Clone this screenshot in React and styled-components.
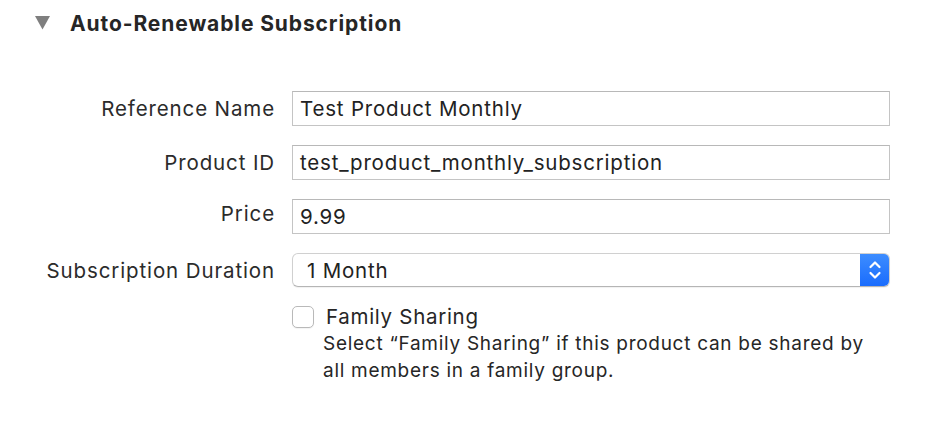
import React from "react";
import styled, { createGlobalStyle } from "styled-components";

const Global = createGlobalStyle`
  html, body { margin: 0; padding: 0; background: #ffffff; }
  body { font-family: Inter, "Noto Sans", sans-serif; color: #262626; }
`;

const Page = styled.div`
  width: 930px;
  height: 432px;
  box-sizing: border-box;
  padding-top: 9px;
  overflow: hidden;
`;

const Header = styled.div`
  display: flex;
  align-items: center;
  gap: 20px;
  padding-left: 35px;
  height: 28px;
`;

const Title = styled.h2`
  margin: 0;
  font-size: 21px;
  font-weight: 700;
  color: #262626;
  letter-spacing: 0.9px;
`;

const Form = styled.div`
  display: grid;
  grid-template-columns: 274px 598px;
  column-gap: 18px;
  row-gap: 19px;
  margin-top: 54px;
  align-items: center;
`;

const Label = styled.label`
  text-align: right;
  font-size: 20.5px;
  letter-spacing: 0.88px;
  margin-right: -1px;
  color: #2b2b2b;
  transform: translateY(${(p) => p.$shift || 0}px);
`;

const Field = styled.div`
  box-sizing: border-box;
  height: 35px;
  border: 1px solid #c4c4c4;
  border-top-color: #b8b8b8;
  background: #fff;
  display: flex;
  align-items: center;
  padding-left: 7px;
  font-size: 20.5px;
  letter-spacing: 0.8px;
  color: #222;
`;

const Popup = styled.div`
  box-sizing: border-box;
  height: 34px;
  border-radius: 6px;
  border: 1px solid #d0d0d0;
  border-bottom-color: #b5b5b5;
  box-shadow: 0 1px 1px rgba(0, 0, 0, 0.06);
  background: #fff;
  display: flex;
  align-items: stretch;
  overflow: hidden;
  font-size: 20.5px;
  letter-spacing: 0.8px;
  color: #222;
`;

const PopupText = styled.div`
  flex: 1;
  display: flex;
  align-items: center;
  padding-left: 14px;
`;

const Stepper = styled.div`
  width: 29px;
  background: linear-gradient(#3d8dff, #1a6cfd);
  display: flex;
  align-items: center;
  justify-content: center;
`;

const CheckRow = styled.div`
  grid-column: 2;
  display: flex;
  flex-direction: column;
  margin-top: -2px;
`;

const CheckLine = styled.div`
  display: flex;
  align-items: center;
  gap: 12px;
`;

const Box = styled.span`
  box-sizing: border-box;
  width: 22px;
  height: 22px;
  border-radius: 5px;
  border: 1px solid #b9b9b9;
  background: #fff;
  box-shadow: 0 1px 1px rgba(0, 0, 0, 0.05);
`;

const CheckLabel = styled.span`
  font-size: 20.5px;
  letter-spacing: 0.7px;
  color: #262626;
`;

const Help = styled.p`
  margin: 1px 0 0 31px;
  font-size: 19px;
  letter-spacing: 0.72px;
  line-height: 27px;
  color: #262626;
  width: 560px;
`;

export default function App() {
  return (
    <Page>
      <Global />
      <Header>
        <svg width="15" height="14" viewBox="0 0 15 14">
          <polygon points="0,0 15,0 7.5,13.5" fill="#7f7f7f" />
        </svg>
        <Title>Auto-Renewable Subscription</Title>
      </Header>
      <Form>
        <Label>Reference Name</Label>
        <Field>Test Product Monthly</Field>
        <Label>Product ID</Label>
        <Field>test_product_monthly_subscription</Field>
        <Label $shift={-3}>Price</Label>
        <Field>9.99</Field>
        <Label>Subscription Duration</Label>
        <Popup>
          <PopupText>1 Month</PopupText>
          <Stepper>
            <svg width="16" height="24" viewBox="0 0 16 24" fill="none" stroke="#fff" strokeWidth="2.2" strokeLinecap="round" strokeLinejoin="round">
              <polyline points="3.5,9 8,4.5 12.5,9" />
              <polyline points="3.5,15 8,19.5 12.5,15" />
            </svg>
          </Stepper>
        </Popup>
        <CheckRow>
          <CheckLine>
            <Box />
            <CheckLabel>Family Sharing</CheckLabel>
          </CheckLine>
          <Help>
            Select “Family Sharing” if this product can be shared by all members in a family group.
          </Help>
        </CheckRow>
      </Form>
    </Page>
  );
}
